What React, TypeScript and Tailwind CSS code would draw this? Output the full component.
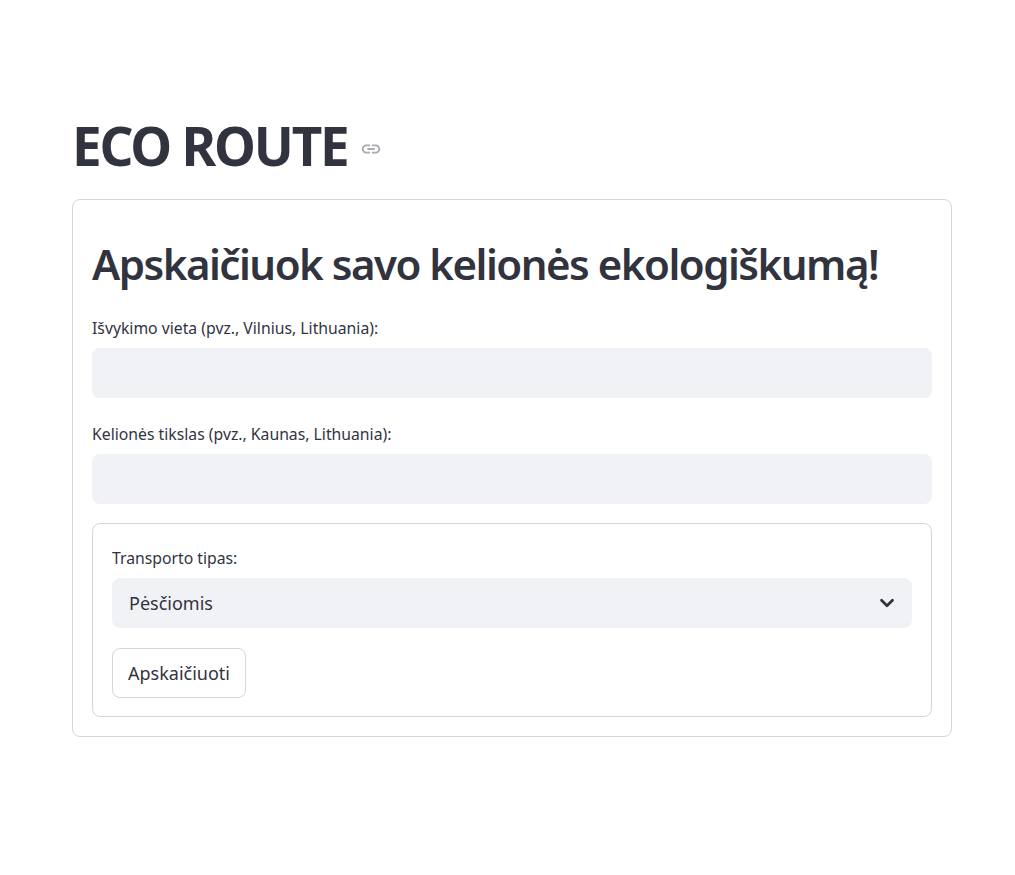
import React from "react";

function LinkIcon() {
  return (
    <svg width="22" height="22" viewBox="0 0 24 24" fill="#a9abb3" aria-hidden="true">
      <path d="M3.9 12c0-1.71 1.39-3.1 3.1-3.1h4V7H7c-2.76 0-5 2.24-5 5s2.24 5 5 5h4v-1.9H7c-1.71 0-3.1-1.39-3.1-3.1zM8 13h8v-2H8v2zm9-6h-4v1.9h4c1.71 0 3.1 1.39 3.1 3.1s-1.39 3.1-3.1 3.1h-4V17h4c2.76 0 5-2.24 5-5s-2.24-5-5-5z" />
    </svg>
  );
}

function Chevron() {
  return (
    <svg width="22" height="22" viewBox="0 0 24 24" fill="none" stroke="#31333f" strokeWidth="3" strokeLinecap="round" strokeLinejoin="round" aria-hidden="true">
      <path d="M6 9l6 6 6-6" />
    </svg>
  );
}

export default function App() {
  return (
    <div
      className="min-h-screen bg-white text-[#31333f]"
      style={{ fontFamily: '"Noto Sans", "Open Sans", sans-serif' }}
    >
      <div className="pl-[72px] pr-[63px] pt-[112px]">
        <div className="flex items-center">
          <h1 className="text-[53px] font-bold leading-[68px] tracking-[-2.2px]">ECO ROUTE</h1>
          <span className="ml-[12px] mt-[6px]"><LinkIcon /></span>
        </div>
        <div className="mt-[19px] border border-[#d6d6d9] rounded-[8px] px-[19px] pt-[34px] pb-[19px]">
          <h2 className="text-[42px] font-semibold leading-[60px] tracking-[-1.5px] whitespace-nowrap">
            Apskaičiuok savo kelionės ekologiškumą!
          </h2>
          <div className="mt-[24px] text-[15.75px] leading-[20px]">Išvykimo vieta (pvz., Vilnius, Lithuania):</div>
          <div className="mt-[10px] h-[50px] rounded-[8px] bg-[#f0f2f6]"></div>
          <div className="mt-[26px] text-[15.75px] leading-[20px]">Kelionės tikslas (pvz., Kaunas, Lithuania):</div>
          <div className="mt-[10px] h-[50px] rounded-[8px] bg-[#f0f2f6]"></div>
          <div className="mt-[19px] border border-[#d6d6d9] rounded-[8px] px-[19px] pt-[24px] pb-[18px]">
            <div className="text-[15.75px] leading-[20px]">Transporto tipas:</div>
            <div className="mt-[10px] h-[50px] rounded-[8px] bg-[#f0f2f6] flex items-center justify-between pl-[17px] pr-[14px]">
              <span className="text-[18px]">Pėsčiomis</span>
              <Chevron />
            </div>
            <button className="mt-[20px] h-[50px] px-[15px] rounded-[8px] border border-[#d6d6d9] bg-white text-[18px]">
              Apskaičiuoti
            </button>
          </div>
        </div>
      </div>
    </div>
  );
}
